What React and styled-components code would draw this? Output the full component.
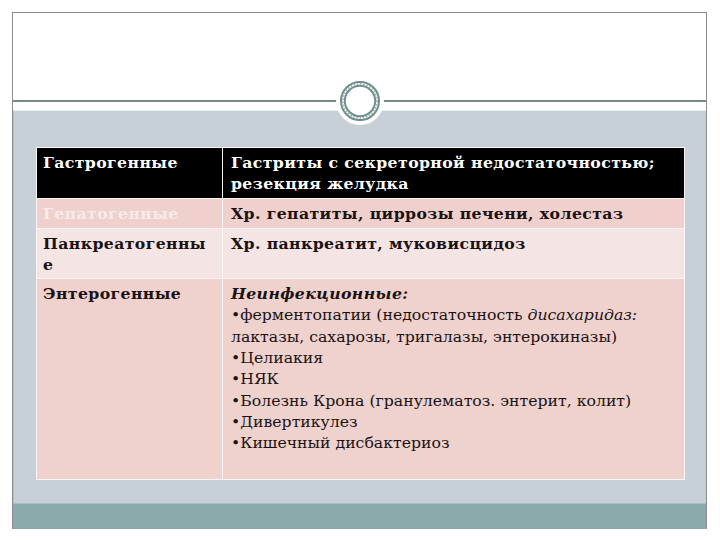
import React from 'react';
import styled, { createGlobalStyle } from 'styled-components';

const GlobalStyle = createGlobalStyle`
  html, body {
    margin: 0;
    padding: 0;
    background: #ffffff;
  }
  body {
    width: 720px;
    height: 540px;
    overflow: hidden;
  }
`;

const Slide = styled.div`
  box-sizing: border-box;
  margin: 12px 13px 0 12px;
  width: 695px;
  border: 1.5px solid #8d8d8d;
  border-bottom: none;
  display: flex;
  flex-direction: column;
`;

const TitleArea = styled.div`
  position: relative;
  height: 87px;
  background: #ffffff;
  border-bottom: 2px solid #7d8686;
`;

const Ornament = styled.div`
  position: absolute;
  left: 323px;
  top: 64px;
  width: 48px;
  height: 48px;
  border-radius: 50%;
  background: #ffffff;
  z-index: 2;
  display: flex;
  align-items: center;
  justify-content: center;
`;

const Gap = styled.div`
  height: 8px;
  background: #ffffff;
  border-bottom: 1px solid #e4ecec;
`;

const Body = styled.div`
  background: #c6d0d6;
  padding: 36px 21px 23px 22px;
  border-left: 1px solid #a9c4bc;
`;

const Footer = styled.div`
  height: 25px;
  background: #8aaaab;
  border-top: 1px solid #a8c2c2;
`;

const Table = styled.table`
  width: 649px;
  border-collapse: collapse;
  border: 1px solid #f6f2f2;
  font-family: 'DejaVu Serif', 'Liberation Serif', serif;
  font-size: 15.7px;
  line-height: 21.3px;
  color: #1a1212;
`;

const Row = styled.tr`
  background: ${(p) => p.$bg};
  height: ${(p) => p.$h}px;
`;

const Cell = styled.td`
  box-sizing: border-box;
  vertical-align: top;
  padding: ${(p) => (p.$left ? '4px 2px 3px 6px' : '4px 4px 3px 8px')};
  width: ${(p) => (p.$left ? '186px' : 'auto')};
  border: 1px solid #faf4f4;
  font-weight: ${(p) => (p.$bold ? 700 : 400)};
  letter-spacing: ${(p) => (p.$bold ? '0.4px' : '0')};
  color: ${(p) => p.$color || 'inherit'};
`;

const Em = styled.span`
  font-style: italic;
  font-weight: ${(p) => (p.$bold ? 700 : 400)};
  letter-spacing: ${(p) => (p.$bold ? '0.4px' : '0')};
`;

const Line = styled.div`
  white-space: nowrap;
`;

const Ring = () => (
  <svg width="44" height="44" viewBox="0 0 44 44">
    <circle cx="22" cy="22" r="19" fill="none" stroke="#6f8e8c" strokeWidth="2" />
    <circle cx="22" cy="22" r="15.2" fill="none" stroke="#6f8e8c" strokeWidth="2" />
    <circle
      cx="22"
      cy="22"
      r="17.1"
      fill="none"
      stroke="#9bb0ae"
      strokeWidth="1.6"
      strokeDasharray="1.6 1.6"
    />
  </svg>
);

const rows = [
  { left: 'Гастрогенные', right: ['Гастриты с секреторной недостаточностью;', 'резекция желудка'], bg: '#000000', color: '#ffffff', h: 50 },
  { left: 'Гепатогенные', right: ['Хр. гепатиты, циррозы печени, холестаз'], bg: '#efd0cd', color: '#f7ebea', rightColor: '#1a1212', h: 30 },
  { left: ['Панкреатогенны', 'е'], right: ['Хр. панкреатит, муковисцидоз'], bg: '#f4e4e3', h: 50 },
];

const entero = [
  'Целиакия',
  'НЯК',
  'Болезнь Крона (гранулематоз. энтерит, колит)',
  'Дивертикулез',
  'Кишечный дисбактериоз',
];

export default function App() {
  return (
    <>
      <GlobalStyle />
      <Slide>
        <TitleArea>
          <Ornament>
            <Ring />
          </Ornament>
        </TitleArea>
        <Gap />
        <Body>
          <Table>
            <tbody>
              {rows.map((r, i) => (
                <Row key={i} $bg={r.bg} $h={r.h}>
                  <Cell $left $bold $color={r.color}>
                    {Array.isArray(r.left)
                      ? r.left.map((t) => <Line key={t}>{t}</Line>)
                      : r.left}
                  </Cell>
                  <Cell $bold $color={r.rightColor || r.color}>
                    {r.right.map((t) => (
                      <Line key={t}>{t}</Line>
                    ))}
                  </Cell>
                </Row>
              ))}
              <Row $bg="#efd1ce" $h={201}>
                <Cell $left $bold>
                  Энтерогенные
                </Cell>
                <Cell>
                  <Line>
                    <Em $bold>Неинфекционные:</Em>
                  </Line>
                  <Line>
                    •ферментопатии (недостаточность <Em>дисахаридаз:</Em>
                  </Line>
                  <Line>лактазы, сахарозы, тригалазы, энтерокиназы)</Line>
                  {entero.map((t) => (
                    <Line key={t}>•{t}</Line>
                  ))}
                </Cell>
              </Row>
            </tbody>
          </Table>
        </Body>
        <Footer />
      </Slide>
    </>
  );
}
